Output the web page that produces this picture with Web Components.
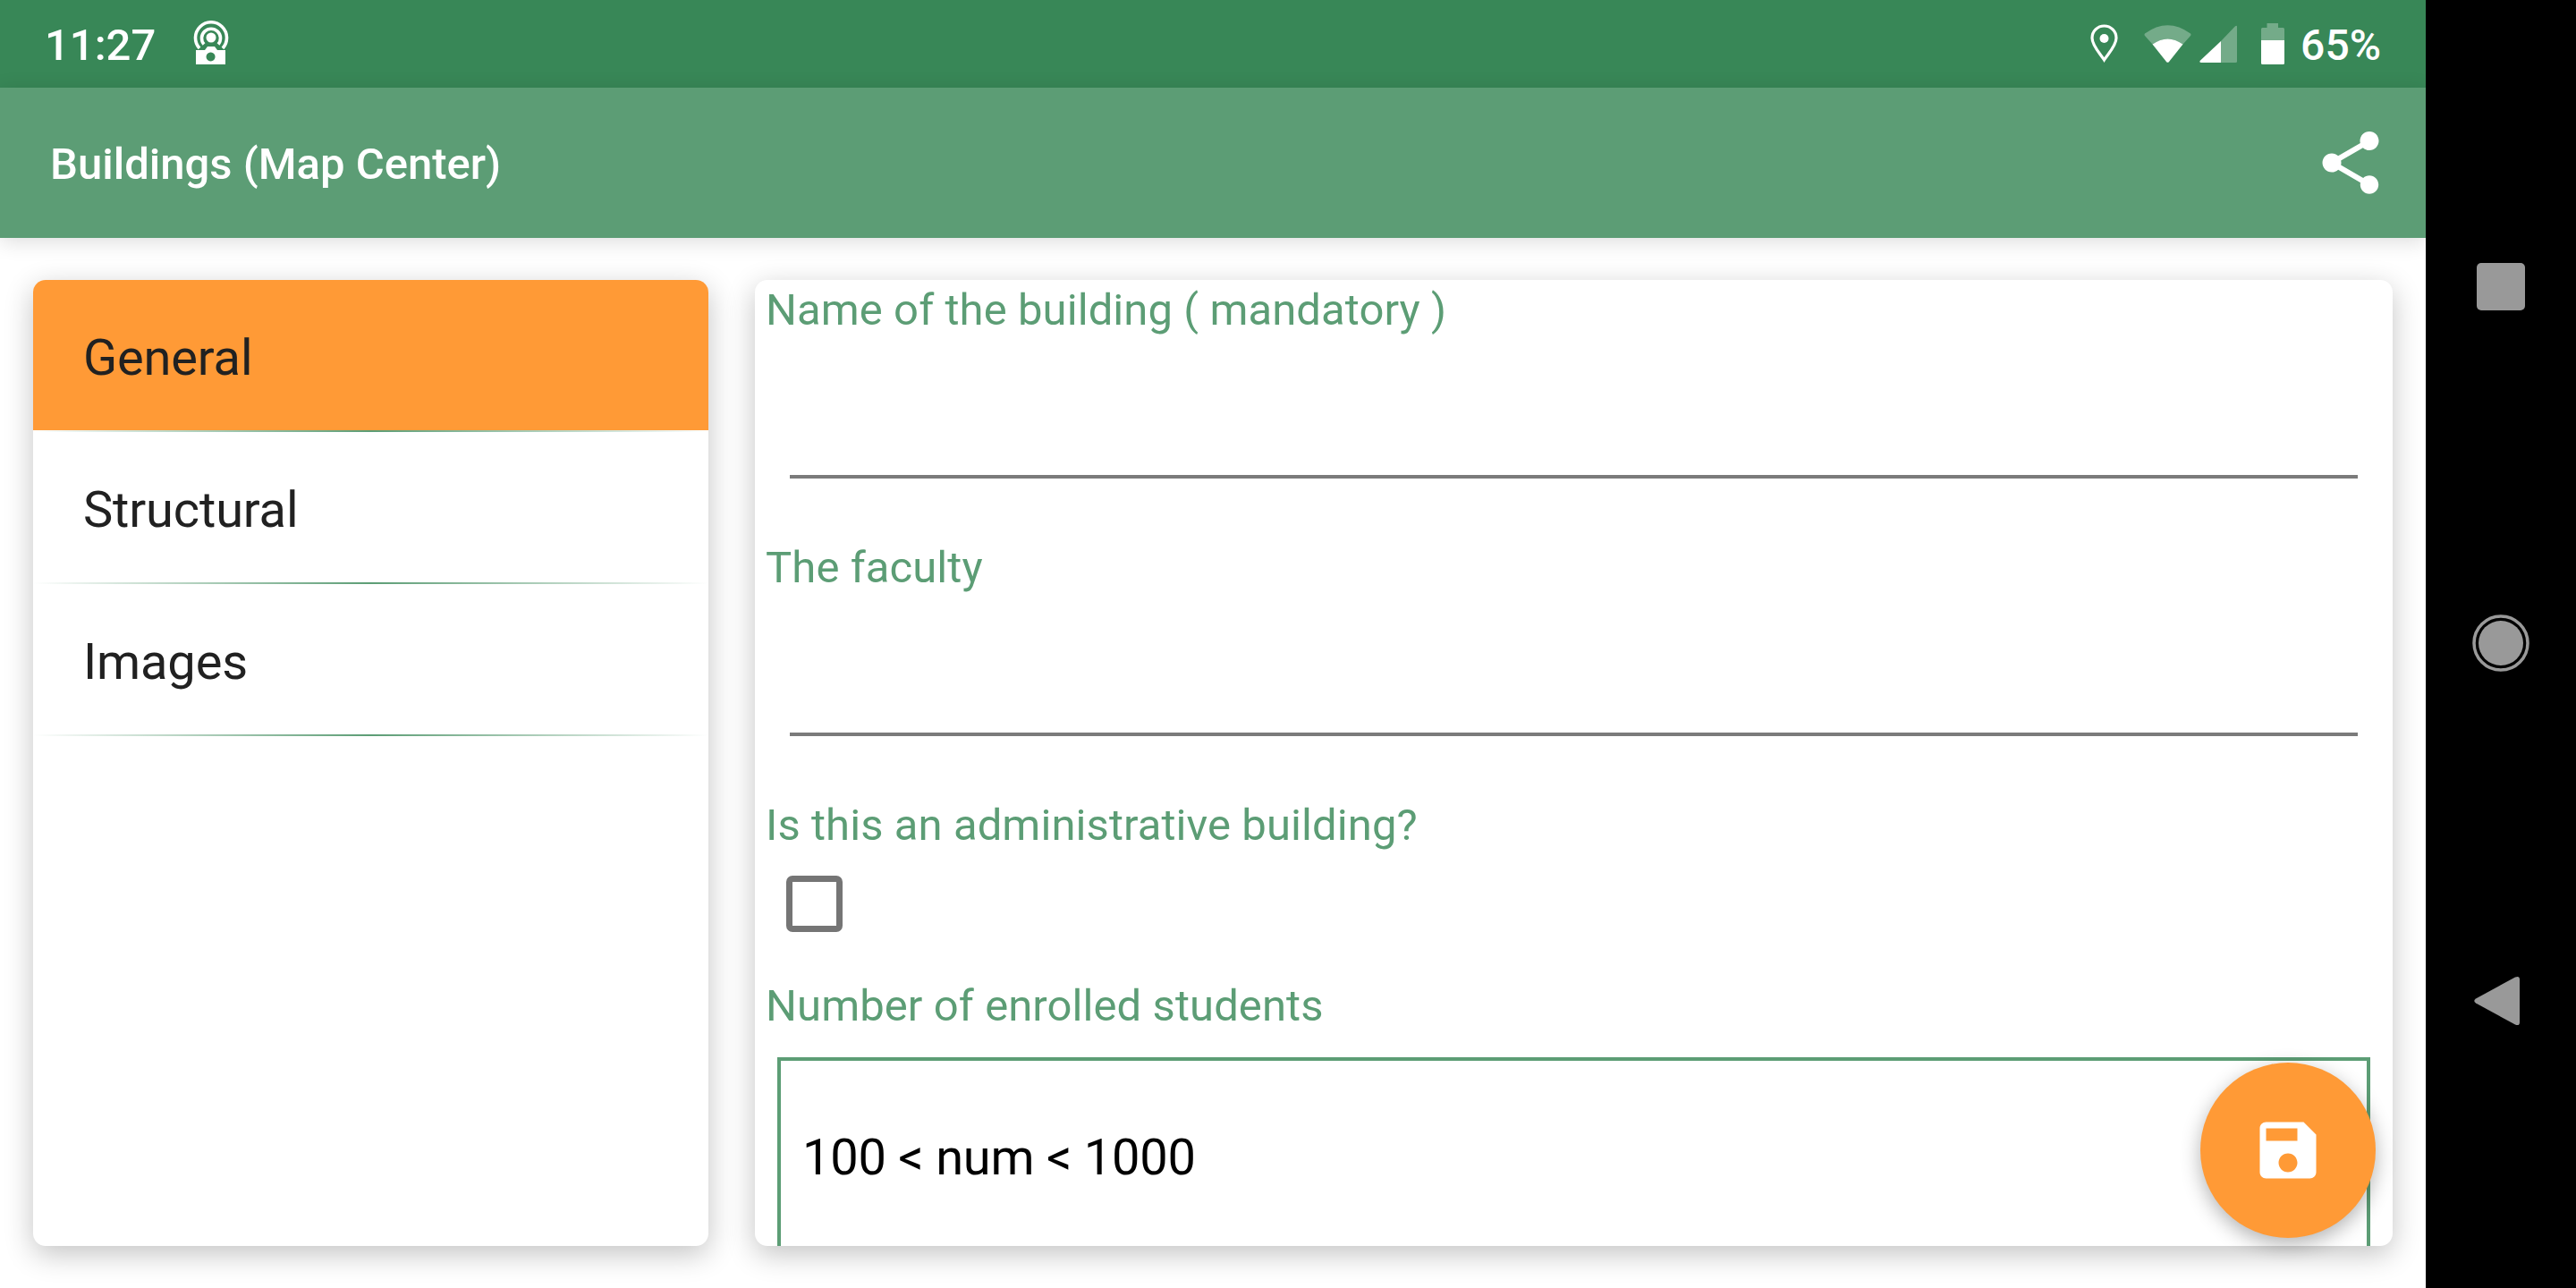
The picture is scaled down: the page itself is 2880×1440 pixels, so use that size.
<!DOCTYPE html>
<html>
<head>
<meta charset="utf-8">
<title>Buildings (Map Center)</title>
<style>
  html, body { margin: 0; height: 100%; background: #000; overflow: hidden; }
  body { font-family: Roboto, "Liberation Sans", sans-serif; }
</style>
</head>
<body>
<app-screen>
  <status-bar slot="status"></status-bar>
  <app-bar slot="bar">Buildings (Map Center)</app-bar>
  <side-card slot="side">
    <tab-item active>General</tab-item>
    <tab-item>Structural</tab-item>
    <tab-item>Images</tab-item>
  </side-card>
  <form-card slot="form">
    <field-label>Name of the building ( mandatory )</field-label>
    <line-input></line-input>
    <field-label>The faculty</field-label>
    <line-input></line-input>
    <field-label>Is this an administrative building?</field-label>
    <check-box></check-box>
    <field-label>Number of enrolled students</field-label>
    <number-box>100 &lt; num &lt; 1000</number-box>
  </form-card>
  <save-fab slot="fab"></save-fab>
  <nav-keys slot="nav"></nav-keys>
</app-screen>

<script>
class AppScreen extends HTMLElement {
  constructor() {
    super();
    this.attachShadow({ mode: "open" });
  }
  connectedCallback() {
    this.shadowRoot.innerHTML = `
      <style>
        :host { display: flex; width: 2880px; height: 1440px; }
        .app { position: relative; width: 2712px; height: 1440px; background: #fff; display: flex; flex-direction: column; overflow: hidden; }
        .content { flex: 1; min-height: 0; display: grid; grid-template-columns: 755px 1fr; gap: 52px; padding: 47px 37px; }
      </style>
      <div class="app">
        <slot name="status"></slot>
        <slot name="bar"></slot>
        <div class="content">
          <slot name="side"></slot>
          <slot name="form"></slot>
        </div>
        <slot name="fab"></slot>
      </div>
      <slot name="nav"></slot>
    `;
  }
}

class StatusBar extends HTMLElement {
  constructor() {
    super();
    this.attachShadow({ mode: "open" });
  }
  connectedCallback() {
    this.shadowRoot.innerHTML = `
      <style>
        :host { display: flex; align-items: center; height: 98px; flex: none; background: #388757; color: #fff; padding: 0 50px 0 50px; font: 500 49px Roboto, sans-serif; }
        .time { width: 166px; padding-top: 3px; }
        .cast { margin-top: -2px; }
        .right { margin-left: auto; display: flex; align-items: center; }
        .pct { margin-left: 18px; font-size: 48px; padding-top: 2px; }
        svg { display: block; }
      </style>
      <span class="time">11:27</span>
      <svg class="cast" width="40" height="50" viewBox="0 0 40 50">
        <g fill="none" stroke="#fff" stroke-width="3.6">
          <path d="M7 31A17.5 17.5 0 1 1 33 31"/>
          <path d="M12 26.500A10.500 10.500 0 1 1 28 26.500"/>
        </g>
        <circle cx="20" cy="19" r="5.500" fill="#fff"/>
        <path fill="#fff" fill-rule="evenodd" d="M3 33H13L16 29H24L27 33H36V49H3ZM19.500 35.500a5 5 0 1 0 .1 0Z"/>
      </svg>
      <div class="right">
        <svg width="31" height="44" viewBox="0 0 31 44" style="margin-right:29px">
          <path fill="none" stroke="#fff" stroke-width="3.2" d="M15.500 40C11 33 2 24 2 15.500A13.500 13.500 0 0 1 29 15.500C29 24 20 33 15.500 40Z"/>
          <circle cx="15.500" cy="16" r="5" fill="#fff"/>
        </svg>
        <svg width="53" height="43" viewBox="0 0 53 43" style="margin-right:9px">
          <path fill="#fff" fill-opacity=".3" d="M1 9.500Q26.500 -9 52 9.500Q53 10.500 52 12L43.500 21.500Q26.500 9.500 9.500 21.500L1 12Q0 10.500 1 9.500Z"/>
          <path fill="#fff" d="M9.500 21.500Q26.500 9.500 43.500 21.500L28 41a2 2 0 0 1-3 0Z"/>
        </svg>
        <svg width="42" height="43" viewBox="0 0 42 43" style="margin-right:27px">
          <path fill="#fff" fill-opacity=".3" d="M24 42V18L40 1.200Q42 0 42 2V40.500Q42 42 40.500 42Z"/>
          <path fill="#fff" d="M24 18V42H2Q-.5 42 .8 39.800Z"/>
        </svg>
        <svg width="26" height="46" viewBox="0 0 26 46">
          <path fill="#fff" fill-opacity=".3" d="M6.500 0H19V5H24.500Q26 5 26 6.500V19H0V6.500Q0 5 1.500 5H6.500Z"/>
          <path fill="#fff" d="M0 19H26V44.500Q26 46 24.500 46H1.500Q0 46 0 44.500Z"/>
        </svg>
        <span class="pct">65%</span>
      </div>
    `;
  }
}

class AppBar extends HTMLElement {
  constructor() {
    super();
    this.attachShadow({ mode: "open" });
  }
  connectedCallback() {
    this.shadowRoot.innerHTML = `
      <style>
        :host { display: flex; align-items: center; justify-content: space-between; height: 168px; flex: none; position: relative; background: #5c9d75; color: #fff; padding: 0 42px 0 56px; box-shadow: 0 4px 22px rgba(0,0,0,.14); font: 500 49px Roboto, sans-serif; }
        span { padding-top: 3px; }
        svg { display: block; }
      </style>
      <span><slot></slot></span>
      <svg width="84" height="84" viewBox="0 0 24 24" fill="#fff">
        <path d="M18 16.080c-.76 0-1.440.3-1.960.77L8.910 12.700c.05-.23.090-.46.090-.7s-.04-.47-.09-.7l7.050-4.110c.54.5 1.250.81 2.040.81 1.660 0 3-1.340 3-3s-1.340-3-3-3-3 1.340-3 3c0 .24.040.47.090.7L8.040 9.810C7.500 9.310 6.790 9 6 9c-1.660 0-3 1.340-3 3s1.340 3 3 3c.79 0 1.500-.31 2.040-.81l7.120 4.160c-.05.21-.08.43-.08.65 0 1.610 1.310 2.920 2.920 2.920s2.920-1.310 2.920-2.920-1.310-2.920-2.920-2.920z"/>
      </svg>
    `;
  }
}

class SideCard extends HTMLElement {
  constructor() {
    super();
    this.attachShadow({ mode: "open" });
  }
  connectedCallback() {
    this.shadowRoot.innerHTML = `
      <style>
        :host { display: block; height: 1080px; background: #fff; border-radius: 14px; box-shadow: 0 9px 32px rgba(0,0,0,.24); overflow: hidden; }
      </style>
      <slot></slot>
    `;
  }
}

class TabItem extends HTMLElement {
  constructor() {
    super();
    this.attachShadow({ mode: "open" });
  }
  connectedCallback() {
    this.shadowRoot.innerHTML = `
      <style>
        :host { display: block; color: #212121; font: 400 56px/66px Roboto, sans-serif; letter-spacing: -.15px; }
        :host([active]) .label { background: #ff9a36; }
        .label { height: 168px; box-sizing: border-box; padding: 54px 0 0 56px; }
        .line { height: 2px; background: linear-gradient(to right, rgba(92,157,117,0), #5c9d75 50%, rgba(92,157,117,0)); }
      </style>
      <div class="label"><slot></slot></div>
      <div class="line"></div>
    `;
  }
}

class FormCard extends HTMLElement {
  constructor() {
    super();
    this.attachShadow({ mode: "open" });
  }
  connectedCallback() {
    this.shadowRoot.innerHTML = `
      <style>
        :host { display: block; height: 1080px; box-sizing: border-box; padding: 5px 0 0 12px; background: #fff; border-radius: 14px; box-shadow: 0 9px 32px rgba(0,0,0,.24); overflow: hidden; }
      </style>
      <slot></slot>
    `;
  }
}

class FieldLabel extends HTMLElement {
  constructor() {
    super();
    this.attachShadow({ mode: "open" });
  }
  connectedCallback() {
    this.shadowRoot.innerHTML = `
      <style>
        :host { display: block; color: #5c9d75; font: 400 49px/57px Roboto, sans-serif; letter-spacing: .08px; }
      </style>
      <slot></slot>
    `;
  }
}

class LineInput extends HTMLElement {
  constructor() {
    super();
    this.attachShadow({ mode: "open" });
  }
  connectedCallback() {
    this.shadowRoot.innerHTML = `
      <style>
        :host { display: block; height: 231px; box-sizing: border-box; padding: 156px 39px 0 27px; }
        div { height: 3.5px; background: #7b7b7b; }
      </style>
      <div></div>
    `;
  }
}

class CheckBox extends HTMLElement {
  constructor() {
    super();
    this.attachShadow({ mode: "open" });
  }
  connectedCallback() {
    this.shadowRoot.innerHTML = `
      <style>
        :host { display: block; height: 145px; box-sizing: border-box; padding: 28px 0 0 23px; }
        div { width: 63px; height: 63px; box-sizing: border-box; border: 7px solid #757575; border-radius: 7px; }
      </style>
      <div></div>
    `;
  }
}

class NumberBox extends HTMLElement {
  constructor() {
    super();
    this.attachShadow({ mode: "open" });
  }
  connectedCallback() {
    this.shadowRoot.innerHTML = `
      <style>
        :host { display: block; margin: 29px 25px 0 13px; height: 300px; box-sizing: border-box; border: 4px solid #5c9d75; padding: 75px 0 0 24px; color: #000; font: 400 56px/66px Roboto, sans-serif; letter-spacing: -.25px; }
      </style>
      <slot></slot>
    `;
  }
}

class SaveFab extends HTMLElement {
  constructor() {
    super();
    this.attachShadow({ mode: "open" });
  }
  connectedCallback() {
    this.shadowRoot.innerHTML = `
      <style>
        :host { position: absolute; right: 56px; bottom: 56px; width: 196px; height: 196px; border-radius: 50%; background: #ff9a36; box-shadow: 0 7px 22px rgba(0,0,0,.3); display: flex; align-items: center; justify-content: center; }
        svg { display: block; }
      </style>
      <svg width="84" height="84" viewBox="0 0 24 24" fill="#fff">
        <path d="M17 3H5c-1.110 0-2 .9-2 2v14c0 1.100.89 2 2 2h14c1.100 0 2-.9 2-2V7l-4-4zm-5 16c-1.660 0-3-1.340-3-3s1.340-3 3-3 3 1.340 3 3-1.340 3-3 3zm3-10H5V5h10v4z"/>
      </svg>
    `;
  }
}

class NavKeys extends HTMLElement {
  constructor() {
    super();
    this.attachShadow({ mode: "open" });
  }
  connectedCallback() {
    this.shadowRoot.innerHTML = `
      <style>
        :host { display: flex; flex-direction: column; align-items: center; justify-content: center; gap: 340px; width: 168px; height: 1440px; background: #000; }
        svg { display: block; }
      </style>
      <svg width="54" height="53" viewBox="0 0 54 53"><rect width="54" height="53" rx="5" fill="#999"/></svg>
      <svg width="64" height="64" viewBox="0 0 64 64">
        <circle cx="32" cy="32" r="30" fill="none" stroke="#999" stroke-width="3.500"/>
        <circle cx="32" cy="32" r="25" fill="#999"/>
      </svg>
      <svg width="56" height="56" viewBox="0 0 56 56" style="margin-left:-7px">
        <path fill="#999" d="M3 25.500L47 1.500Q52 -.5 52 4V52Q52 56.500 47 54.500L3 30.500Q-.5 28 3 25.500Z"/>
      </svg>
    `;
  }
}

customElements.define("app-screen", AppScreen);
customElements.define("status-bar", StatusBar);
customElements.define("app-bar", AppBar);
customElements.define("side-card", SideCard);
customElements.define("tab-item", TabItem);
customElements.define("form-card", FormCard);
customElements.define("field-label", FieldLabel);
customElements.define("line-input", LineInput);
customElements.define("check-box", CheckBox);
customElements.define("number-box", NumberBox);
customElements.define("save-fab", SaveFab);
customElements.define("nav-keys", NavKeys);
</script>
</body>
</html>
